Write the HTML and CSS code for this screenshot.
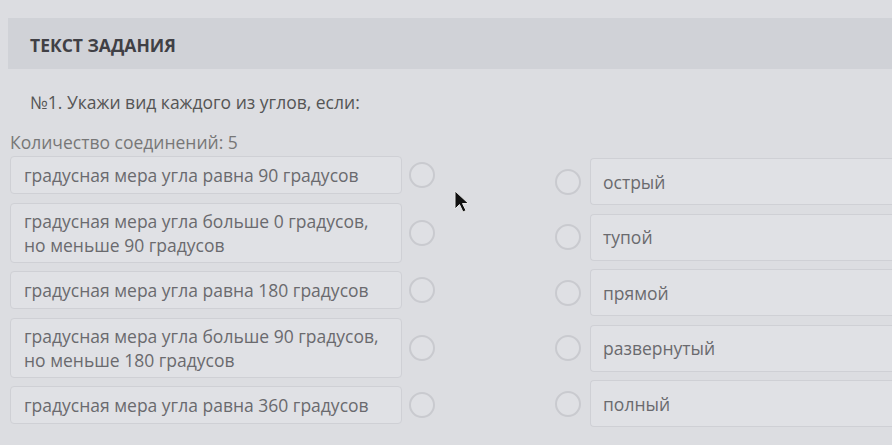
FILE: index.html
```html
<!DOCTYPE html>
<html lang="ru">
<head>
<meta charset="utf-8">
<title>Текст задания</title>
<link rel="stylesheet" href="styles.css">
</head>
<body>
<div class="page">
  <div class="task-header">ТЕКСТ ЗАДАНИЯ</div>
  <div class="question">№1. Укажи вид каждого из углов, если:</div>
  <div class="count">Количество соединений: 5</div>
  <div class="match">
    <div class="col-left">
      <div class="item-l"><div class="box-l">градусная мера угла равна 90 градусов</div><span class="dot"></span></div>
      <div class="item-l tall"><div class="box-l">градусная мера угла больше 0 градусов,<br>но меньше 90 градусов</div><span class="dot"></span></div>
      <div class="item-l"><div class="box-l">градусная мера угла равна 180 градусов</div><span class="dot"></span></div>
      <div class="item-l tall"><div class="box-l">градусная мера угла больше 90 градусов,<br>но меньше 180 градусов</div><span class="dot"></span></div>
      <div class="item-l"><div class="box-l">градусная мера угла равна 360 градусов</div><span class="dot"></span></div>
    </div>
    <div class="col-right">
      <div class="item-r"><span class="dot"></span><div class="box-r">острый</div></div>
      <div class="item-r"><span class="dot"></span><div class="box-r">тупой</div></div>
      <div class="item-r"><span class="dot"></span><div class="box-r">прямой</div></div>
      <div class="item-r"><span class="dot"></span><div class="box-r">развернутый</div></div>
      <div class="item-r"><span class="dot"></span><div class="box-r">полный</div></div>
    </div>
  </div>
  <svg class="cursor" width="18" height="24" viewBox="0 0 18 24"><path d="M1 1 L1 19 L5.5 14.5 L9 22 L12 20.5 L8.5 13.5 L14.5 13.5 Z" fill="#111" stroke="#e8e8e8" stroke-width="1"/></svg>
</div>
</body>
</html>
```
FILE: styles.css
```css
html, body {
  margin: 0;
  padding: 0;
}
body {
  background: #dcdde1;
  font-family: "Open Sans", "Noto Sans", sans-serif;
  color: #666;
  width: 892px;
  height: 445px;
  overflow: hidden;
}
.page {
  position: relative;
  padding-top: 18px;
}
.task-header {
  margin-left: 8px;
  height: 51px;
  background: #d0d2d7;
  display: flex;
  align-items: center;
  padding-left: 22px;
  padding-top: 2px;
  box-sizing: border-box;
  font-size: 17.5px;
  font-weight: 700;
  color: #404045;
}
.question {
  margin: 21px 0 0 30px;
  font-size: 17.5px;
  line-height: 24px;
  color: #555;
}
.count {
  margin: 16px 0 0 10px;
  font-size: 17.5px;
  line-height: 24px;
  color: #777;
}
.match {
  display: flex;
  margin-top: 2px;
  padding-left: 10px;
}
.col-left {
  display: flex;
  flex-direction: column;
  gap: 8.5px;
  width: 545px;
}
.item-l {
  display: flex;
  align-items: center;
  gap: 7px;
  height: 38px;
}
.item-l.tall {
  height: 60px;
}
.box-l {
  width: 392px;
  height: 100%;
  box-sizing: border-box;
  border: 1px solid #cfd0d5;
  border-radius: 4px;
  background: #e0e1e5;
  padding: 0 13px;
  display: flex;
  align-items: center;
  font-size: 17.5px;
  line-height: 24px;
  color: #6a6a6e;
}
.dot {
  width: 26px;
  height: 26px;
  box-sizing: border-box;
  border: 2px solid #c9cacf;
  border-radius: 50%;
  background: #dfe0e4;
  flex: none;
}
.col-right {
  display: flex;
  flex-direction: column;
  gap: 8.5px;
  padding-top: 2px;
  flex: 1;
}
.item-r {
  display: flex;
  align-items: center;
  gap: 9px;
  height: 47px;
}
.box-r {
  flex: 1;
  height: 100%;
  box-sizing: border-box;
  border: 1px solid #cfd0d5;
  border-right: none;
  border-radius: 4px 0 0 4px;
  background: #e0e1e5;
  padding: 0 12px;
  display: flex;
  align-items: center;
  font-size: 17.5px;
  color: #6a6a6e;
}
.cursor {
  position: absolute;
  left: 454px;
  top: 190px;
}
```
